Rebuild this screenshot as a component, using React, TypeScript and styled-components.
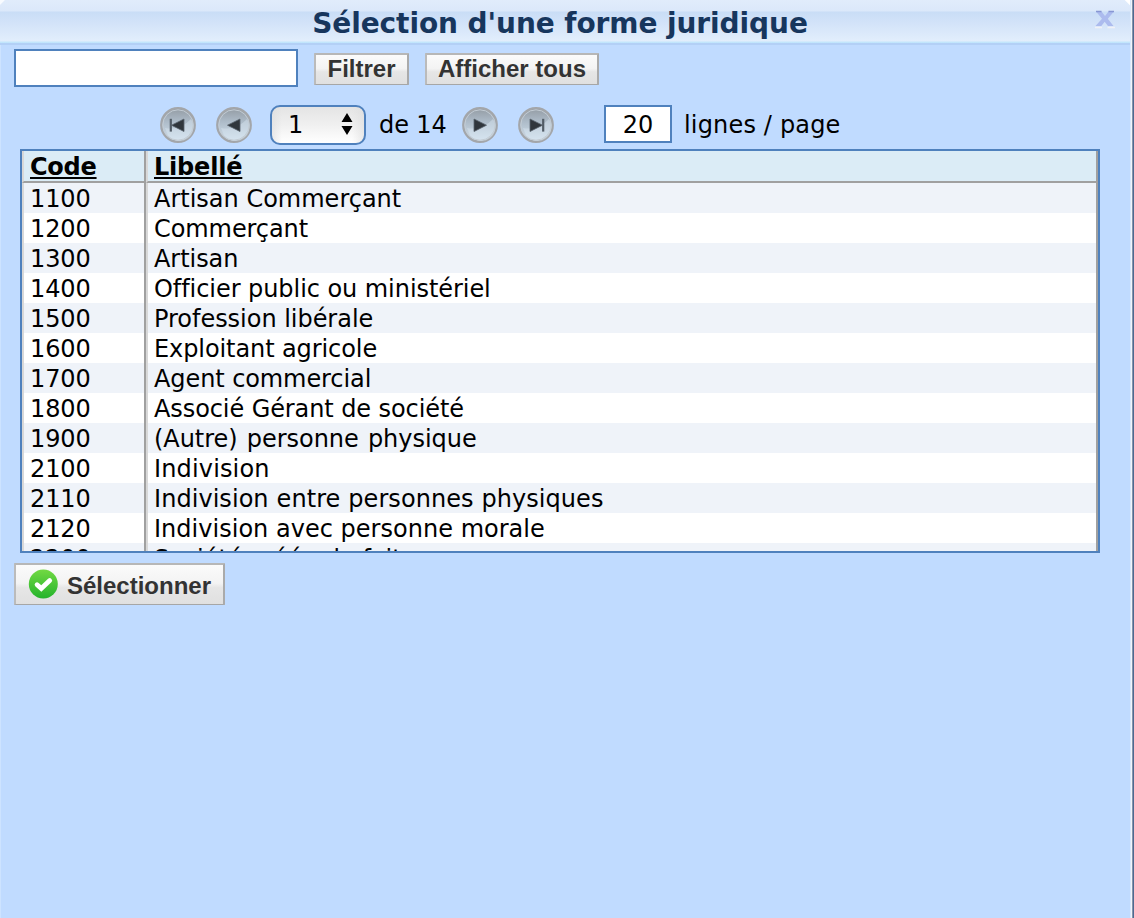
import React from "react";
import styled, { createGlobalStyle } from "styled-components";

const Global = createGlobalStyle`
  * { box-sizing: border-box; }
  body { margin: 0; background: #c0dbff; overflow: hidden; }
  button, input { margin: 0; }
`;

const Window = styled.div`
  width: 1134px;
  height: 918px;
  display: flex;
  background: #c0dbff;
  font-family: Verdana, "DejaVu Sans", sans-serif;
  font-size: 24px;
  font-variant-ligatures: none;
  color: #000;
  overflow: hidden;
`;

const LeftEdge = styled.div`
  width: 1px;
  background: #cde3ff;
`;

const Content = styled.div`
  width: 1129px;
  display: flex;
  flex-direction: column;
`;

const RightEdge = styled.div`
  width: 4px;
  background: linear-gradient(90deg, #d8e8fd 0 1px, #f0f5fb 1px 2px, #8494ab 2px 3px, #4c6a92 3px);
`;

const TitleBar = styled.header`
  display: flex;
  height: 45px;
  margin: 0 -1px;
  padding: 0 14px 0 0;
  background:
    linear-gradient(135deg, #f8fbff 3px, #fff0 4px),
    linear-gradient(225deg, #fff 4px, #fff0 5px),
    linear-gradient(180deg, #e1ecfb 0, #dbe8fa 11px, #c9ddf6 12px, #d0e1f8 20px, #e2eefc 41px, #c3e6fc 42px, #c0e5fd 43px, #b3d0f6 43px, #b3d0f6 45px);
`;

const Title = styled.h1`
  flex: 1;
  margin: 0;
  padding: 4px 0 0 27px;
  text-align: center;
  font-size: 28px;
  line-height: 40px;
  letter-spacing: -0.08px;
  color: #17365d;
  white-space: nowrap;
`;

const Close = styled.button`
  width: 24px;
  height: 28px;
  margin-top: 6px;
  padding: 0;
  border: 0;
  background: none;
`;

const FilterRow = styled.div`
  display: flex;
  align-items: flex-start;
  height: 60px;
  padding: 4px 0 0 13px;
`;

const Field = styled.input<{ $w: number }>`
  width: ${(p) => p.$w}px;
  height: 38px;
  padding: 0;
  border: 2px solid #4f81bd;
  background: #fff;
  text-align: center;
  font: 24px Verdana, "DejaVu Sans", sans-serif;
  color: #000;
  outline: none;
`;

const PageSize = styled(Field)`
  margin-bottom: 2px;
  padding-top: 2px;
`;

const Button = styled.button<{ $w: number; $h: number }>`
  display: flex;
  align-items: center;
  justify-content: center;
  gap: 8px;
  width: ${(p) => p.$w}px;
  height: ${(p) => p.$h}px;
  padding: 0;
  border: solid;
  border-width: 2px 2px 1px;
  border-color: #b7b7b7 #aaa #a6a6a6 #bbb;
  border-radius: 1px;
  background: linear-gradient(180deg, #fbfbfb 0, #f3f3f3 47%, #e6e6e6 58%, #e0e0e0 100%);
  font: bold 24px/28px "Liberation Sans", Arial, sans-serif;
  color: #333;
  white-space: nowrap;
`;

const FilterButton = styled(Button)`
  margin: 4px 0 0 16px;
  padding-bottom: 1px;
`;

const Pager = styled.nav`
  display: flex;
  align-items: center;
  height: 40px;
  margin: 0 0 4px 159px;
`;

const PageButton = styled.button`
  width: 36px;
  height: 36px;
  margin-right: 20px;
  padding: 0;
  border: 0;
  background: none;
  svg { display: block; }
`;

const PageSelect = styled.div`
  display: flex;
  align-items: center;
  justify-content: space-between;
  width: 96px;
  height: 40px;
  margin: 0 13px 0 -2px;
  padding: 0 11px 0 16px;
  border: 2px solid #4f81bd;
  border-radius: 10px;
  background: linear-gradient(90deg, #ddd9 0, #fff0 10px, #fff0 80px, #ddd9 100%), linear-gradient(180deg, #e4e4e4, #f0f0f0 50%, #fff);
`;

const Arrows = styled.svg`
  margin-bottom: 2px;
`;

const PagerText = styled.span<{ $w: number; $ls?: number }>`
  width: ${(p) => p.$w}px;
  letter-spacing: ${(p) => p.$ls ?? 0}px;
  line-height: 30px;
  white-space: nowrap;
`;

const LinesLabel = styled(PagerText)`
  margin-left: 12px;
`;

const Spacer = styled.span`
  width: 30px;
`;

const Grid = styled.div`
  width: 1080px;
  height: 404px;
  margin-left: 19px;
  border: 2px solid #4f81bd;
  background: #a0a0a0;
  padding-right: 2px;
  overflow: hidden;
`;

const Row = styled.div<{ $bg: string }>`
  display: grid;
  grid-template-columns: 124px 1fr;
  height: 30px;
  background: ${(p) => p.$bg};
`;

const HeadRow = styled(Row)`
  height: 32px;
  font-weight: bold;
  text-decoration: underline;
  text-decoration-thickness: 2px;
  text-underline-offset: 2px;
`;

const Cell = styled.div<{ $head?: boolean; $last?: boolean; $ls?: number; $ws?: number }>`
  height: ${(p) => (p.$head ? 32 : 30)}px;
  border-left: 2px solid #d8d8d8;
  border-right: ${(p) => (p.$last ? 0 : "2px solid #a0a0a0")};
  border-bottom: ${(p) => (p.$head ? "2px solid #a0a0a0" : 0)};
  padding-left: 6px;
  line-height: 32px;
  letter-spacing: ${(p) => p.$ls ?? 0}px;
  word-spacing: ${(p) => p.$ws ?? 0}px;
  white-space: nowrap;
`;

const SelectButton = styled(Button)`
  margin: 10px 0 0 13px;
  padding: 0;
`;

const CheckIcon = styled.svg`
  margin-bottom: 2px;
`;

const Label = styled.span`
  padding: 2px 0 0 1px;
`;

const rows: { code: string; label: string; spacing: number; word?: number }[] = [
  { code: "1100", label: "Artisan Commerçant", spacing: 0 },
  { code: "1200", label: "Commerçant", spacing: -0.08 },
  { code: "1300", label: "Artisan", spacing: -0.05 },
  { code: "1400", label: "Officier public ou ministériel", spacing: -0.06 },
  { code: "1500", label: "Profession libérale", spacing: -0.03 },
  { code: "1600", label: "Exploitant agricole", spacing: -0.09 },
  { code: "1700", label: "Agent commercial", spacing: -0.09 },
  { code: "1800", label: "Associé Gérant de société", spacing: -0.09 },
  { code: "1900", label: "(Autre) personne physique", spacing: -0.04, word: 1.6 },
  { code: "2100", label: "Indivision", spacing: 0.15 },
  { code: "2110", label: "Indivision entre personnes physiques", spacing: 0.05, word: 0.3 },
  { code: "2120", label: "Indivision avec personne morale", spacing: 0.02 },
  { code: "2200", label: "Société créée de fait", spacing: 0 },
];

type Nav = "first" | "prev" | "next" | "last";

function NavButton({ kind }: { kind: Nav }) {
  const back = kind === "first" || kind === "prev";
  const bar = kind === "first" || kind === "last";
  const id = "orb-" + kind;
  return (
    <PageButton aria-label={kind}>
      <svg width="36" height="36" viewBox="0 0 36 36">
        <defs>
          <linearGradient id={id} x1="0" y1="0" x2="0" y2="1">
            <stop offset="0" stopColor="#939ba3" />
            <stop offset="0.4" stopColor="#adbbc8" />
            <stop offset="1" stopColor="#d5e4f0" />
          </linearGradient>
        </defs>
        <circle cx="18" cy="18" r="16.8" fill={`url(#${id})`} stroke="#a3a6aa" strokeWidth="2.2" />
        <path d="M5 21Q20 24 31 12A14 14 0 0 1 8 28Z" fill="#d9e6f1" opacity=".45" />
        <circle cx="18" cy="18" r="15.2" fill="none" stroke="#c3ccd4" strokeWidth="1" />
        <g transform={back ? "matrix(-1 0 0 1 36 0)" : undefined}>
          <path d="M12 12L24.5 18.2L12 24.5Z" fill="#30363c" stroke="#58626c" strokeWidth=".8" />
          {bar && <path d="M25.2 11.8V24.6" stroke="#525c66" strokeWidth="2.2" />}
        </g>
      </svg>
    </PageButton>
  );
}

export default function App() {
  return (
    <>
      <Global />
      <Window>
        <LeftEdge />
        <Content>
          <TitleBar>
            <Title>Sélection d'une forme juridique</Title>
            <Close aria-label="Fermer">
              <svg width="24" height="28" viewBox="0 0 24 28">
                <path d="M3 5.5H8.5L12 10L15.5 5.5H21L14.8 12.8L20.5 20H15L11.7 15.7L8.3 20H2.5L9 12.8Z" fill="#acbbee" />
                <path d="M3 5.5H8.5M15.5 5.5H21" stroke="#8797d3" strokeWidth="1.5" />
                <path d="M2 21.5H9M14.5 21.5H22" stroke="#f1f1f6" strokeWidth="1.5" />
              </svg>
            </Close>
          </TitleBar>
          <FilterRow>
            <Field $w={284} />
            <FilterButton $w={95} $h={32}>Filtrer</FilterButton>
            <FilterButton $w={174} $h={32}>Afficher tous</FilterButton>
          </FilterRow>
          <Pager>
            <NavButton kind="first" />
            <NavButton kind="prev" />
            <PageSelect>
              <span>1</span>
              <Arrows width="12" height="24" viewBox="0 0 12 24">
                <path d="M6 1L11.5 10H.5ZM6 23L.5 14H11.5Z" fill="#000" />
              </Arrows>
            </PageSelect>
            <PagerText $w={83} $ls={-0.1}>de 14</PagerText>
            <NavButton kind="next" />
            <NavButton kind="last" />
            <Spacer />
            <PageSize $w={68} defaultValue="20" />
            <LinesLabel $w={180} $ls={0.17}>lignes / page</LinesLabel>
          </Pager>
          <Grid>
            <HeadRow $bg="#dbecf6">
              <Cell $head $ls={-0.25}>Code</Cell>
              <Cell $head $last $ls={-0.2}>Libellé</Cell>
            </HeadRow>
            {rows.map(({ code, label, spacing, word }, i) => (
              <Row key={code} $bg={i % 2 ? "#fff" : "#eff3f9"}>
                <Cell $ls={-0.1}>{code}</Cell>
                <Cell $last $ls={spacing} $ws={word}>{label}</Cell>
              </Row>
            ))}
          </Grid>
          <div>
            <SelectButton $w={211} $h={42}>
              <CheckIcon width="30" height="30" viewBox="0 0 30 30">
                <defs>
                  <linearGradient id="ok" x1="0" y1="0" x2="0" y2="1">
                    <stop offset="0" stopColor="#72d943" />
                    <stop offset="1" stopColor="#24b32c" />
                  </linearGradient>
                </defs>
                <circle cx="15.3" cy="15" r="14.5" fill="url(#ok)" />
                <path d="M9.1 15.7L13.3 19.5L21.7 11.6" fill="none" stroke="#fff" strokeWidth="4.8" strokeLinecap="round" />
              </CheckIcon>
              <Label>Sélectionner</Label>
            </SelectButton>
          </div>
        </Content>
        <RightEdge />
      </Window>
    </>
  );
}
